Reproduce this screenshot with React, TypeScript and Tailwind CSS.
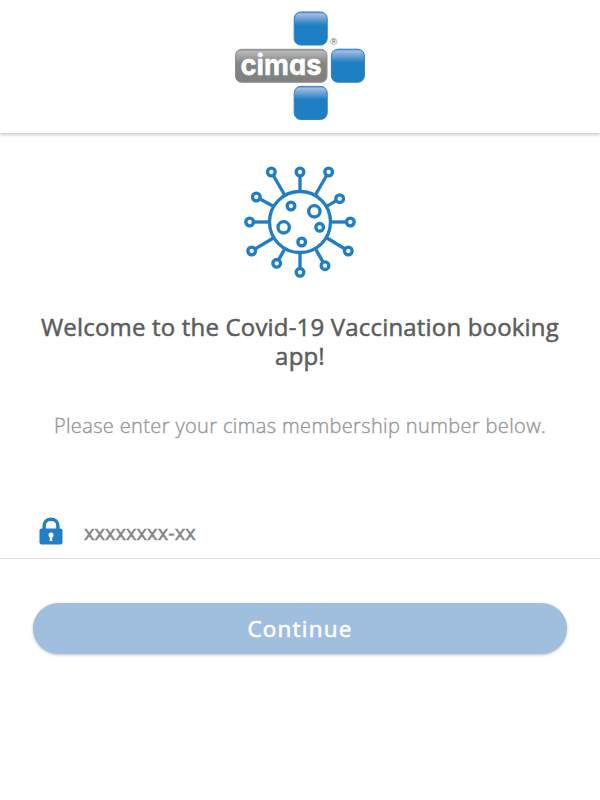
import { useState } from "react";

const spikes = [
  { x: 109, y: 51, bx: 149, by: 120 },
  { x: 195, y: 51, bx: 195, by: 107 },
  { x: 281, y: 51, bx: 241, by: 120 },
  { x: 314, y: 131, bx: 275, by: 154 },
  { x: 346, y: 201, bx: 289, by: 201 },
  { x: 340, y: 288, bx: 276, by: 249 },
  { x: 270, y: 332, bx: 243, by: 284 },
  { x: 195, y: 352, bx: 195, by: 295 },
  { x: 125, y: 325, bx: 148, by: 284 },
  { x: 50, y: 288, bx: 115, by: 249 },
  { x: 44, y: 201, bx: 101, by: 201 },
  { x: 64, y: 126, bx: 115, by: 154 },
];

function CimasLogo() {
  return (
    <svg width="150" height="132" viewBox="0 0 150 132" role="img" aria-label="cimas">
      <defs>
        <linearGradient id="blue" x1="0" y1="0" x2="0" y2="1">
          <stop offset="0" stopColor="#5c8dcc" />
          <stop offset="0.06" stopColor="#a3bbe2" />
          <stop offset="0.4" stopColor="#1f7fc4" />
          <stop offset="1" stopColor="#1f7fc4" />
        </linearGradient>
        <linearGradient id="grey" x1="0" y1="0" x2="0" y2="1">
          <stop offset="0" stopColor="#898a89" />
          <stop offset="0.07" stopColor="#b7b8b7" />
          <stop offset="0.42" stopColor="#838583" />
          <stop offset="1" stopColor="#7f817f" />
        </linearGradient>
      </defs>
      <g fill="url(#blue)" stroke="#2580c4" strokeWidth="1">
        <rect x="69.2" y="12" width="33" height="33" rx="6.5" />
        <rect x="106.4" y="49.2" width="33" height="33" rx="6.5" />
        <rect x="69.2" y="86.4" width="33" height="33" rx="6.5" />
      </g>
      <rect x="10.5" y="49.3" width="91.5" height="33" rx="6" fill="url(#grey)" stroke="#8f918f" />
      <text
        x="15.5"
        y="74.6"
        textLength="81"
        lengthAdjust="spacingAndGlyphs"
        fill="#fff"
        stroke="#fff"
        strokeWidth="0.5"
        className="font-['Inter',sans-serif] text-[28.5px] font-bold [font-feature-settings:'cv11']"
      >
        cimas
      </text>
      <text x="105.2" y="45" fill="#666" className="font-['Liberation_Sans',sans-serif] text-[9.5px]">
        ®
      </text>
    </svg>
  );
}

function VirusIcon() {
  return (
    <svg
      width="130"
      height="130"
      viewBox="0 0 390 390"
      fill="none"
      stroke="#1f7ec6"
      strokeWidth="10"
      aria-hidden="true"
    >
      {spikes.map((s) => (
        <line key={`${s.x}-${s.y}`} x1={s.x} y1={s.y} x2={s.bx} y2={s.by} />
      ))}
      {spikes.map((s) => (
        <circle key={`${s.x}-${s.y}`} cx={s.x} cy={s.y} r="11.5" fill="#fff" />
      ))}
      <circle cx="195" cy="201" r="91.5" fill="#fff" />
      <circle cx="168" cy="153" r="11.5" />
      <circle cx="238" cy="169" r="17" />
      <circle cx="146" cy="217" r="17" />
      <circle cx="254" cy="217" r="11.5" />
      <circle cx="200" cy="261" r="11.5" />
    </svg>
  );
}

function LockIcon() {
  return (
    <svg className="mt-[2px]" width="24" height="28" viewBox="0 0 24 28" aria-hidden="true">
      <path
        d="M5.1 13V8.8C5.1 4.9 8 2.2 12 2.2s6.9 2.7 6.9 6.6V13"
        fill="none"
        stroke="#207fc5"
        strokeWidth="3.4"
      />
      <rect x="0.5" y="11.5" width="23" height="16" rx="2" fill="#207fc5" />
      <circle cx="12" cy="17.9" r="2.5" fill="#fff" />
      <path d="M11 18h2l.4 6h-2.8z" fill="#fff" />
    </svg>
  );
}

export default function App() {
  const [member, setMember] = useState("");

  return (
    <div className="flex min-h-screen flex-col bg-white font-['Open_Sans',sans-serif]">
      <header className="flex h-[133px] shrink-0 justify-center shadow-[0_2px_3px_rgba(0,0,0,0.2)]">
        <CimasLogo />
      </header>

      <main className="flex flex-col">
        <div className="mt-[22px] flex justify-center">
          <VirusIcon />
        </div>

        <h1 className="mt-[27px] px-8 text-center text-[24px] leading-[29px] font-normal tracking-[0.18px] text-[#5c5c5c] [-webkit-text-stroke:0.5px_#5c5c5c]">
          Welcome to the Covid-19 Vaccination booking app!
        </h1>

        <p className="mt-[42px] text-center text-[20px] leading-7 font-light tracking-[0.37px] text-[#999] [-webkit-text-stroke:0.4px_#999]">
          Please enter your cimas membership number below.
        </p>

        <label className="mt-[75px] flex h-[44px] items-start border-b border-[#dcdcdc] pl-[39px]">
          <LockIcon />
          <input
            value={member}
            onChange={(e) => setMember(e.target.value)}
            placeholder="xxxxxxxx-xx"
            className="mt-[3px] ml-[21px] h-[30px] flex-1 text-[20px] tracking-[0.05px] text-[#777] outline-none [-webkit-text-stroke:0.45px_#858585] placeholder:text-[#858585]"
          />
        </label>

        <button
          type="button"
          className="mx-[33px] mt-[44px] h-[50.5px] rounded-full bg-[#a0bede] pt-[2px] text-[22.5px] font-normal tracking-[1.2px] text-white shadow-[0_1px_3px_rgba(0,0,0,0.25)] [-webkit-text-stroke:0.6px_#fff]"
        >
          Continue
        </button>
      </main>
    </div>
  );
}
